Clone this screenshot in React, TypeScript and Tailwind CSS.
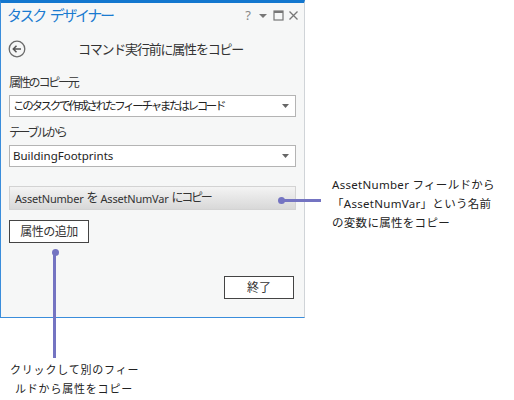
import React from 'react';

function Caret() {
  return (
    <svg width="7" height="4" viewBox="0 0 7 4" className="shrink-0">
      <path d="M0 0h7L3.5 4z" fill="#666" />
    </svg>
  );
}

function Select({ value, latin = false }: { value: string; latin?: boolean }) {
  return (
    <div className="mx-[8px] flex h-[22px] items-center justify-between border border-[#b4b4b4] bg-white pl-[3px] pr-[6px] text-[#222]">
      <span
        className={`whitespace-nowrap leading-none ${
          latin ? 'text-[11.5px]' : 'text-[11.5px] tracking-[-2.3px]'
        }`}
      >
        {value}
      </span>
      <Caret />
    </div>
  );
}

function Dot({ className }: { className: string }) {
  return <div className={`absolute h-[7px] w-[7px] rounded-full bg-[#7474c2] ${className}`} />;
}

export default function App() {
  return (
    <div className="relative h-[400px] w-[514px] overflow-hidden bg-white font-['Noto_Sans','Noto_Sans_CJK_JP',sans-serif]">
      {/* task designer pane */}
      <div className="flex h-[318px] w-[305px] flex-col border-t-[3px] border-l border-b border-r border-t-[#1377cf] border-l-[#3a8ddb] border-b-[#3a8ddb] border-r-[#d0d4d8] bg-[#f6f7f7]">
        <div className="flex h-[25px] items-center justify-between pl-[6px] pr-[5px]">
          <div className="flex whitespace-nowrap text-[15px] leading-none tracking-[-2.4px] text-[#1a7bd0]">
            <span>タスク</span>
            <span className="ml-[5px]">デザイナー</span>
          </div>
          <div className="flex items-center text-[#888]">
            <span className="text-[13px] leading-none">?</span>
            <svg width="10" height="6" viewBox="0 0 10 6" className="ml-[7px]">
              <path d="M1 1h8L5 5z" fill="#777" />
            </svg>
            <svg width="11" height="11" viewBox="0 0 11 11" className="ml-[5px]">
              <rect x="1" y="1" width="9" height="9" fill="none" stroke="#777" strokeWidth="1.2" />
              <rect x="1" y="1" width="9" height="2" fill="#777" />
            </svg>
            <svg width="11" height="11" viewBox="0 0 11 11" className="ml-[4px]">
              <path d="M1.5 1.5l8 8M9.5 1.5l-8 8" stroke="#777" strokeWidth="1.3" />
            </svg>
          </div>
        </div>

        <div className="relative mt-[10px] flex h-[22px] items-center justify-center">
          <svg width="18" height="18" viewBox="0 0 18 18" className="absolute left-[7px] top-[2px]">
            <circle cx="9" cy="9" r="7.8" fill="none" stroke="#6b6b6b" strokeWidth="1.3" />
            <path d="M13 9H5.5M8.5 5.8L5.3 9l3.2 3.2" fill="none" stroke="#555" strokeWidth="1.5" />
          </svg>
          <span className="whitespace-nowrap pl-[16px] text-[13px] leading-none tracking-[-1.2px] text-[#333]">
            コマンド実行前に属性をコピー
          </span>
        </div>

        <div className="mt-[17px] whitespace-nowrap px-[8px] text-[12px] leading-none tracking-[-2.2px] text-[#333]">属性のコピー元</div>
        <div className="mt-[6px]">
          <Select value="このタスクで作成されたフィーチャまたはレコード" />
        </div>

        <div className="mt-[10px] whitespace-nowrap px-[8px] text-[12px] leading-none tracking-[-2.5px] text-[#333]">テーブルから</div>
        <div className="mt-[6px]">
          <Select value="BuildingFootprints" latin />
        </div>

        <div className="mx-[8px] mt-[19px] flex h-[24px] items-center whitespace-nowrap border border-[#d3d3d3] bg-gradient-to-b from-[#f4f4f4] to-[#d8d8d8] px-[5px] text-[11px] leading-none text-[#333]">
          <span className="tracking-[-0.2px]">AssetNumber</span>
          <span className="px-[3px] text-[12px] tracking-[-1px]">を</span>
          <span className="tracking-[-0.2px]">AssetNumVar</span>
          <span className="pl-[3px] text-[12px] tracking-[-2.3px]">にコピー</span>
        </div>

        <div className="mx-[8px] mt-[10px] flex h-[23px] w-[80px] items-center justify-center border border-[#444] bg-white text-[12px] leading-none tracking-[-0.5px] text-[#333]">
          属性の追加
        </div>

        <div className="mt-[33px] flex justify-end pr-[10px]">
          <div className="flex h-[23px] w-[70px] items-center justify-center border border-[#444] bg-white text-[12px] leading-none text-[#333]">
            終了
          </div>
        </div>
      </div>

      {/* callout: copy row */}
      <Dot className="left-[278px] top-[197px]" />
      <div className="absolute left-[281px] top-[199px] h-[3px] w-[40px] bg-[#7474c2]" />
      <div className="absolute left-[332px] top-[175px] text-[11.5px] leading-[19px] tracking-[0.3px] text-[#222]">
        <div>AssetNumber フィールドから</div>
        <div>「AssetNumVar」という名前</div>
        <div>の変数に属性をコピー</div>
      </div>

      {/* callout: add attribute */}
      <Dot className="left-[52px] top-[249px]" />
      <div className="absolute left-[53px] top-[252px] h-[106px] w-[3px] bg-[#7474c2]" />
      <div className="absolute left-[10px] top-[360px] text-[11px] leading-[19px] tracking-[0.8px] text-[#222]">
        <div>クリックして別のフィー</div>
        <div className="pl-[5px]">ルドから属性をコピー</div>
      </div>
    </div>
  );
}
